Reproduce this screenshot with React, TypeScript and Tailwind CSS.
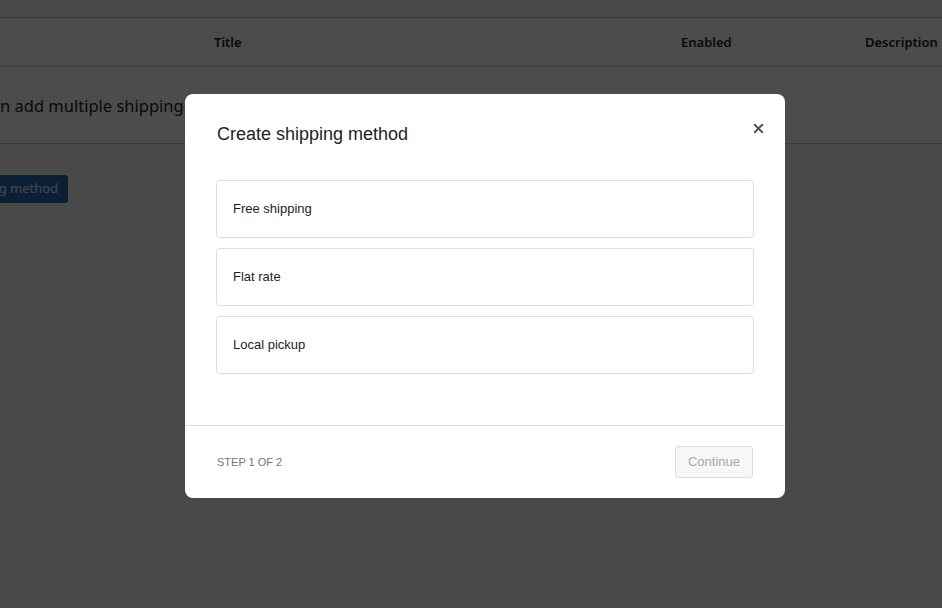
import { X } from "lucide-react";

const methods = ["Free shipping", "Flat rate", "Local pickup"];

export default function App() {
  return (
    <div className="relative h-[608px] w-[942px] overflow-hidden bg-[#f6f6f6] font-['Noto_Sans',sans-serif] text-[#1d2327]">
      {/* page behind the dialog */}
      <div className="pt-[17px]">
        <div className="border-y border-[#c3c4c7] bg-white">
          <div className="flex h-[48px] items-center pt-[2px] text-[13px] font-semibold">
            <div className="w-[214px]" />
            <div className="w-[467px]">Title</div>
            <div className="w-[184px]">Enabled</div>
            <div className="whitespace-nowrap">Description</div>
          </div>
          <div className="flex h-[77px] items-center border-t border-[#c3c4c7] pt-[2px] whitespace-nowrap text-[16.5px]">
            n add multiple shipping methods within this zone. Only customers within the zone will see them.
          </div>
        </div>
        <div className="mt-[31px] flex">
          <button
            type="button"
            className="-ml-[84px] h-[28px] rounded-[3px] bg-[#2271b1] px-[10px] text-[13px] text-white/90 whitespace-nowrap"
          >
            Add shipping method
          </button>
        </div>
      </div>

      {/* dialog overlay */}
      <div className="absolute inset-0 bg-black/70 pl-[185px] pt-[94px] font-['Liberation_Sans',Arial,sans-serif]">
        <section className="flex w-[600px] flex-col rounded-[8px] bg-white text-[#1e1e1e]">
          <div className="relative px-8 pb-[51px] pt-[28px]">
            <h2 className="h-6 text-[18px] leading-6">Create shipping method</h2>
            <button
              type="button"
              aria-label="Close"
              className="absolute right-[20px] top-[27px] grid h-[14px] w-[14px] place-items-center text-[#555]"
            >
              <X className="h-[15px] w-[15px]" strokeWidth={3.2} />
            </button>
            <div className="-mx-px mt-[34px] flex flex-col gap-[10px]">
              {methods.map((m) => (
                <div
                  key={m}
                  className="flex h-[58px] items-center rounded-[4px] border border-[#dcdcde] px-4 text-[13px]"
                >
                  {m}
                </div>
              ))}
            </div>
          </div>
          <div className="flex items-center justify-between border-t border-[#dcdcde] px-8 py-5">
            <span className="text-[11px] uppercase text-[#757575]">Step 1 of 2</span>
            <button
              type="button"
              disabled
              className="h-[32px] w-[78px] rounded-[3px] border border-[#dcdcde] bg-[#f6f7f7] text-[13px] text-[#a7aaad]"
            >
              Continue
            </button>
          </div>
        </section>
      </div>
    </div>
  );
}
